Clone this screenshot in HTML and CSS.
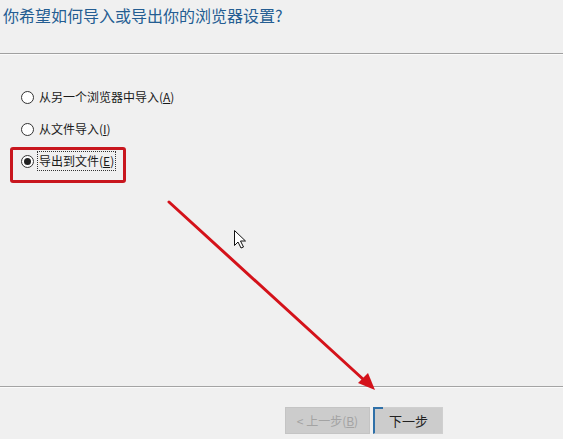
FILE: index.html
```html
<!DOCTYPE html>
<html lang="zh-CN">
<head>
<meta charset="utf-8">
<title>导入/导出设置</title>
<link rel="stylesheet" href="styles.css">
</head>
<body>
<div class="page">
  <div class="header">
    <h1 class="title">你希望如何导入或导出你的浏览器设置?</h1>
  </div>
  <div class="main">
    <div class="options">
      <label class="option"><span class="radio"></span><span class="label">从另一个浏览器中导入(<u>A</u>)</span></label>
      <label class="option"><span class="radio"></span><span class="label">从文件导入(<u>I</u>)</span></label>
      <label class="option checked"><span class="radio"></span><span class="label focus">导出到文件(<u>E</u>)</span></label>
    </div>
  </div>
  <div class="footer">
    <button class="btn disabled">&lt; 上一步(<u>B</u>)</button>
    <button class="btn primary">下一步</button>
  </div>

  <div class="highlight"></div>
  <svg class="annot" width="563" height="439" viewBox="0 0 563 439">
    <line x1="169" y1="202" x2="364" y2="380" stroke="#d4121a" stroke-width="3" stroke-linecap="round"/>
    <polygon points="375,390 358,383 368,373" fill="#d4121a"/>
    <path d="M234.5 230.5 L234.5 245.5 L238 242 L241 248 L243.5 247 L240.5 241 L245.5 241 Z" fill="#fff" stroke="#111" stroke-width="1" stroke-linejoin="round"/>
  </svg>
</div>
</body>
</html>
```
FILE: styles.css
```css
* { box-sizing: border-box; }
html, body { margin: 0; padding: 0; }
body {
  background: #f0f0f0;
  font-family: "Noto Sans CJK SC", "Noto Sans", sans-serif;
  color: #1a1a1a;
}
.page {
  position: relative;
  width: 563px;
  height: 439px;
  overflow: hidden;
  display: flex;
  flex-direction: column;
}
.header {
  height: 54px;
  padding: 4px 0 0 3px;
  border-bottom: 1px solid #a0a0a0;
  box-shadow: 0 1px 0 #fafafa;
}
.title {
  margin: 0;
  font-size: 16px;
  font-weight: normal;
  line-height: 22px;
  color: #245d92;
}
.main { flex: 1; }
.options {
  padding: 33px 0 0 21px;
  display: flex;
  flex-direction: column;
  gap: 12px;
}
.option {
  display: flex;
  align-items: center;
  height: 20px;
  font-size: 12px;
  gap: 4px;
}
.radio {
  width: 13px;
  height: 13px;
  border: 1px solid #333;
  border-radius: 50%;
  background: #fff;
  display: flex;
  align-items: center;
  justify-content: center;
}
.checked .radio::after {
  content: "";
  width: 7px;
  height: 7px;
  border-radius: 50%;
  background: #222;
}
.label { line-height: 18px; padding: 0 1px; }
.label.focus { outline: 1px dotted #333; outline-offset: 0; }
u { text-decoration: underline; }
.footer {
  height: 53px;
  border-top: 1px solid #a4a4a4;
  box-shadow: inset 0 1px 0 #fbfbfb;
  display: flex;
  justify-content: flex-end;
  align-items: flex-start;
  padding: 20px 120px 0 0;
  gap: 3px;
}
.btn {
  height: 27px;
  font-family: inherit;
  font-size: 12px;
  padding: 0;
  border: 1px solid #c4c4c4;
  background: #cccccc;
}
.btn.disabled { width: 85px; color: #a3a3a3; }
.btn.primary {
  position: relative;
  width: 70px;
  color: #222;
  border: 1px solid #cfcfcf;
  border-left: 2px solid #2f70a8;
  font-size: 13px;
}
.btn.primary::before {
  content: "";
  position: absolute;
  left: -2px;
  top: -1px;
  width: 10px;
  height: 2px;
  background: #2f70a8;
}
.highlight {
  position: absolute;
  left: 10px;
  top: 147px;
  width: 116px;
  height: 36px;
  border: 3px solid #c8161e;
  border-radius: 3px;
}
.annot {
  position: absolute;
  left: 0;
  top: 0;
  pointer-events: none;
}
```
